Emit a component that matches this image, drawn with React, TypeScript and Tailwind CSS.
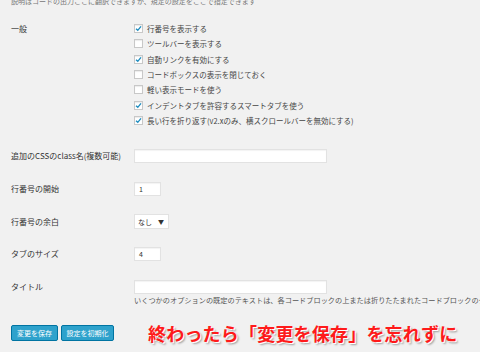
import React from "react";

const jp = "font-['Meiryo','Noto_Sans_CJK_JP',sans-serif]";

const options = [
  { label: "行番号を表示する", checked: true },
  { label: "ツールバーを表示する", checked: false },
  { label: "自動リンクを有効にする", checked: true },
  { label: "コードボックスの表示を閉じておく", checked: false },
  { label: "軽い表示モードを使う", checked: false },
  { label: "インデントタブを許容するスマートタブを使う", checked: true },
  { label: "長い行を折り返す(v2.xのみ、横スクロールバーを無効にする)", checked: true },
];

const Checkbox = ({ checked }: { checked: boolean }) => (
  <span className="w-[9px] h-[9px] bg-white border border-[#c8c8c8] shadow-[inset_0_1px_1px_rgba(0,0,0,0.08)] flex items-center justify-center shrink-0">
    {checked && (
      <svg width="7" height="7" viewBox="0 0 10 10">
        <path d="M1.5 5.2 L4 7.6 L8.6 2" fill="none" stroke="#1e8cbe" strokeWidth="2" />
      </svg>
    )}
  </span>
);

const Field = ({ w, value }: { w: string; value?: string }) => (
  <div
    className={`${w} h-[14px] shrink-0 bg-white border border-[#e2e2e2] shadow-[inset_0_1px_1px_rgba(0,0,0,0.05)] flex items-center pl-[4px] text-[7px] text-[#333]`}
  >
    {value}
  </div>
);

export default function App() {
  return (
    <div className={`w-[480px] h-[352px] overflow-hidden bg-[#f1f1f1] pl-[11px] ${jp}`}>
      <div className="-mt-[3px] leading-[8px] text-[7px] text-[#777] whitespace-nowrap">
        説明はコードの出力ここに翻訳できますが、規定の設定をここで指定できます
      </div>

      <div className="flex mt-[16px]">
        <div className="w-[123px] shrink-0 h-[15.33px] flex items-center text-[8px] text-[#333]">一般</div>
        <div className="flex flex-col">
          {options.map((o) => (
            <div key={o.label} className="h-[15.33px] flex items-center gap-[4px] text-[7.5px] text-[#444] whitespace-nowrap">
              <Checkbox checked={o.checked} />
              <span>{o.label}</span>
            </div>
          ))}
        </div>
      </div>

      <div className="flex items-center mt-[21px]">
        <div className="w-[123px] shrink-0 text-[8px] text-[#333] whitespace-nowrap">追加のCSSのclass名(複数可能)</div>
        <Field w="w-[193px]" />
      </div>

      <div className="flex items-center mt-[19px]">
        <div className="w-[123px] shrink-0 text-[8px] text-[#333]">行番号の開始</div>
        <Field w="w-[27px]" value="1" />
      </div>

      <div className="flex items-center mt-[18px]">
        <div className="w-[123px] shrink-0 text-[8px] text-[#333]">行番号の余白</div>
        <div className="w-[35px] h-[15px] bg-white border border-[#e2e2e2] flex items-center justify-between pl-[3px] pr-[4px] text-[7px] text-[#333]">
          <span>なし</span>
          <span className="text-[6px]">▼</span>
        </div>
      </div>

      <div className="flex items-center mt-[18px]">
        <div className="w-[123px] shrink-0 text-[8px] text-[#333]">タブのサイズ</div>
        <Field w="w-[27px]" value="4" />
      </div>

      <div className="flex mt-[19px]">
        <div className="w-[123px] shrink-0 h-[14px] flex items-center text-[8px] text-[#333]">タイトル</div>
        <div className="flex flex-col">
          <Field w="w-[193px]" />
          <div className="mt-[1px] leading-[10px] text-[7.2px] text-[#555] whitespace-nowrap">
            いくつかのオプションの既定のテキストは、各コードブロックの上または折りたたまれたコードブロックのクリックで表示されます
          </div>
        </div>
      </div>

      <div className="flex items-center mt-[19px]">
        <button className="w-[47px] h-[16px] rounded-[2px] bg-[#2ea2cc] border border-[#0074a2] text-white text-[7px] leading-none">
          変更を保存
        </button>
        <button className="ml-[3px] w-[53px] h-[16px] rounded-[2px] bg-[#2ea2cc] border border-[#0074a2] text-white text-[7px] leading-none">
          設定を初期化
        </button>
        <div className="ml-[34px] leading-none text-[18px] font-bold text-[#ff1a1a] tracking-[0.2px] whitespace-nowrap [text-shadow:1px_1px_0_#fff,2px_2px_2px_rgba(0,0,0,0.35)]">
          終わったら「変更を保存」を忘れずに
        </div>
      </div>
    </div>
  );
}
